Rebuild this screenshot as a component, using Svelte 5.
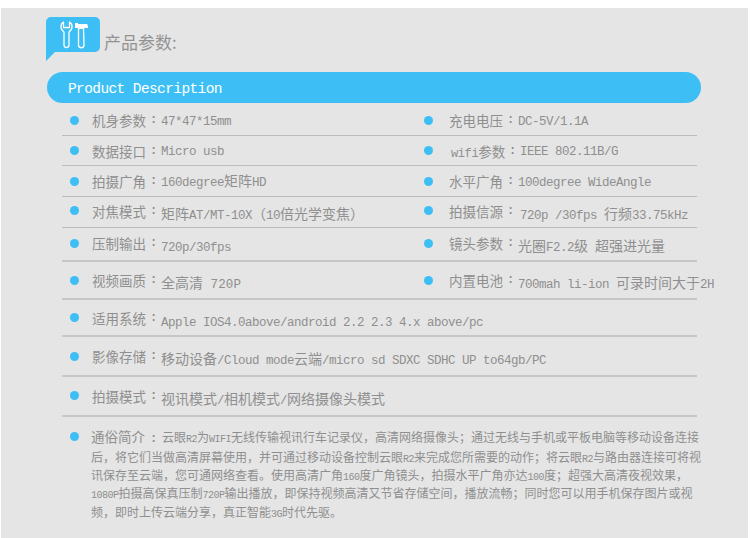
<script>
  const specs = [
    { cls: "r1", left: ["机身参数", "47*47*15mm"], right: ["充电电压", "DC-5V/1.1A"] },
    { cls: "r2", left: ["数据接口", "Micro usb"], right: ["wifi参数", "IEEE 802.11B/G"] },
    { cls: "r3", left: ["拍摄广角", "160degree矩阵HD"], right: ["水平广角", "100degree WideAngle"] },
    { cls: "r4", left: ["对焦模式", "矩阵AT/MT-10X（10倍光学变焦）", "drop"], right: ["拍摄信源", "720p /30fps 行频33.75kHz", "shift drop"] },
    { cls: "r5", left: ["压制输出", "720p/30fps", "drop"], right: ["镜头参数", "光圈F2.2级 超强进光量", "drop"] },
    { cls: "r6", left: ["视频画质", "全高清 720P", "drop wide"], right: ["内置电池", "700mah li-ion 可录时间大于2H", "drop"] },
    { cls: "r7", left: ["适用系统", "Apple IOS4.0above/android 2.2 2.3 4.x above/pc", "drop"] },
    { cls: "r8", left: ["影像存储", "移动设备/Cloud mode云端/micro sd SDXC SDHC UP to64gb/PC", "drop"] },
    { cls: "r9", left: ["拍摄模式", "视讯模式/相机模式/网络摄像头模式", "drop"] },
  ];

  const intro = [
    "云眼R2为WIFI无线传输视讯行车记录仪，高清网络摄像头；通过无线与手机或平板电脑等移动设备连接",
    "后，将它们当做高清屏幕使用，并可通过移动设备控制云眼R2来完成您所需要的动作；将云眼R2与路由器连接可将视",
    "讯保存至云端，您可通网络查看。使用高清广角160度广角镜头，拍摄水平广角亦达100度；超强大高清夜视效果，",
    "1080P拍摄高保真压制720P输出播放，即保持视频高清又节省存储空间，播放流畅；同时您可以用手机保存图片或视",
    "频，即时上传云端分享，真正智能3G时代先驱。",
  ];

  // split mixed text so CJK and latin runs can get their own size
  const cjk = /^[\u3000-\u9fff\uff00-\uffef]/;
  const runs = (text) => text.match(/[\u3000-\u9fff\uff00-\uffef]+|[^\u3000-\u9fff\uff00-\uffef]+/g);
</script>

{#snippet mixed(text)}
  {#each runs(text) as run}<span class={cjk.test(run) ? "cn" : "lat"}>{run}</span>{/each}
{/snippet}

{#snippet cell(spec)}
  <div class="cell">
    <i class="dot"></i>
    <span class="label">{@render mixed(spec[0])}</span>
    <span class="colon">:</span>
    <span class={"value " + (spec[2] ?? "")}>{@render mixed(spec[1])}</span>
  </div>
{/snippet}

<div class="page">
  <header class="head">
    <svg class="bubble" width="54" height="44" viewBox="0 0 54 44" aria-hidden="true">
      <path d="M5 0H49a5 5 0 0 1 5 5V30a5 5 0 0 1-5 5H9L0 44V5a5 5 0 0 1 5-5Z" fill="#3dbff5" />
      <g fill="none" stroke="#fff" stroke-width="1.3" stroke-linejoin="round">
        <path d="M17.500 5C14 7 14 12.500 18 15V28a2.500 2.500 0 0 0 5 0V15C27 12.500 27 7 23.500 5V10.500H17.500Z" />
        <path d="M32.500 11H37.500L38 28a2.750 2.750 0 0 1-5.500 0Z" />
      </g>
      <path d="M29 6H32V7H41L42 9V11H36V12H33V11H29Z" fill="#fff" />
    </svg>
    <h2>产品参数:</h2>
  </header>

  <div class="pill">Product Description</div>

  <div class="table">
    {#each specs as spec}
      <div class={"row " + spec.cls}>
        {@render cell(spec.left)}
        {#if spec.right}{@render cell(spec.right)}{/if}
      </div>
    {/each}
  </div>

  <div class="intro">
    <i class="dot"></i>
    <p>
      <span class="label first">通俗简介</span><span class="colon">:</span>{#each intro as line, i}<span class={i ? "line" : "line head-line"}>{#each runs(line) as run}<span class={cjk.test(run) ? "" : "tiny"}>{run}</span>{/each}</span>{/each}
    </p>
  </div>
</div>

<style>
  :global(body) {
    background: #fff;
  }

  .page {
    box-sizing: border-box;
    height: 530px;
    margin: 8px 2px 0 1px;
    padding: 9px 47px 0 45px;
    background: #e5e5e5;
    color: #8f8f8f;
    font-family: "Noto Sans CJK SC", sans-serif;
    overflow: hidden;
  }

  .head {
    display: flex;
    align-items: flex-start;
    height: 55px;
  }

  .bubble {
    flex: none;
  }

  h2 {
    margin: 13px 0 0 4px;
    font-size: 17px;
    line-height: 24px;
    font-weight: 400;
    color: #939393;
  }

  .pill {
    height: 31px;
    margin-left: 1px;
    padding-left: 21px;
    border-radius: 16px;
    background: #3dbff5;
    color: #fff;
    font-family: "Liberation Mono", monospace;
    font-size: 14.500px;
    letter-spacing: -0.6px;
    line-height: 34px;
    white-space: nowrap;
  }

  .table {
    margin-left: 16px;
    margin-right: 4px;
  }

  .row {
    box-sizing: border-box;
    display: grid;
    grid-template-columns: 354px 1fr;
    border-bottom: 1px solid #bcbcbc;
  }

  .r1 { height: 33px; padding-top: 2px; }
  .r2 { height: 30px; }
  .r3 { height: 31px; }
  .r4 { height: 31px; padding-bottom: 3px; }
  .r5 { height: 34px; padding-bottom: 2px; border-bottom-width: 2px; border-bottom-color: #c6c6c6; }
  .r6 { height: 38px; border-bottom-width: 2px; border-bottom-color: #c6c6c6; }
  .r7 { height: 37px; border-bottom-width: 2px; border-bottom-color: #c6c6c6; }
  .r8 { height: 40px; border-bottom-width: 2px; border-bottom-color: #c6c6c6; }
  .r9 { height: 40px; padding-bottom: 1px; border-bottom-width: 2px; border-bottom-color: #c6c6c6; }

  .r7 .cell,
  .r8 .cell,
  .r9 .cell {
    grid-column: 1 / -1;
  }

  .cell {
    display: flex;
    align-items: center;
    padding-left: 8px;
    white-space: nowrap;
  }

  .dot {
    flex: none;
    width: 9px;
    height: 9px;
    margin-right: 13px;
    border-radius: 50%;
    background: #3dbff5;
  }

  .cell:nth-child(2) .dot {
    margin-right: 16px;
  }

  .r2 .cell:nth-child(2) .label {
    padding-left: 2px;
  }

  .label {
    flex: none;
    width: 54px;
    font-size: 13.500px;
    line-height: 20px;
  }

  .label .lat {
    font-family: "Liberation Mono", monospace;
    font-size: 12px;
    letter-spacing: -0.4px;
    line-height: 1;
  }

  .colon {
    flex: none;
    width: 15px;
    text-align: center;
    font-family: "Liberation Mono", monospace;
    font-size: 12px;
    font-weight: 700;
    line-height: 20px;
  }

  .value {
    padding-bottom: 3px;
    font-size: 14px;
    line-height: 20px;
  }

  .value .lat {
    font-family: "Liberation Mono", monospace;
    font-size: 12.500px;
    letter-spacing: -0.5px;
    line-height: 1;
    white-space: pre;
  }

  .value.drop {
    padding-top: 4px;
    padding-bottom: 0;
  }

  .value.shift {
    padding-left: 2px;
  }

  .value.wide .lat {
    letter-spacing: 0.1px;
  }

  .intro {
    display: flex;
    margin: 10px 0 0 24px;
  }

  .intro .dot {
    margin: 5px 12px 0 0;
  }

  p {
    margin: 0;
    font-size: 12px;
    line-height: 18.200px;
    white-space: nowrap;
  }

  .first {
    display: inline-block;
    font-size: 13.500px;
    line-height: 18px;
    width: 54px;
  }

  p .colon {
    display: inline-block;
    line-height: 18px;
    width: 17px;
  }

  .line {
    display: block;
  }

  .head-line {
    display: inline;
  }

  .tiny {
    font-family: "Liberation Mono", monospace;
    font-size: 10px;
    letter-spacing: -0.5px;
    line-height: 1;
  }
</style>
